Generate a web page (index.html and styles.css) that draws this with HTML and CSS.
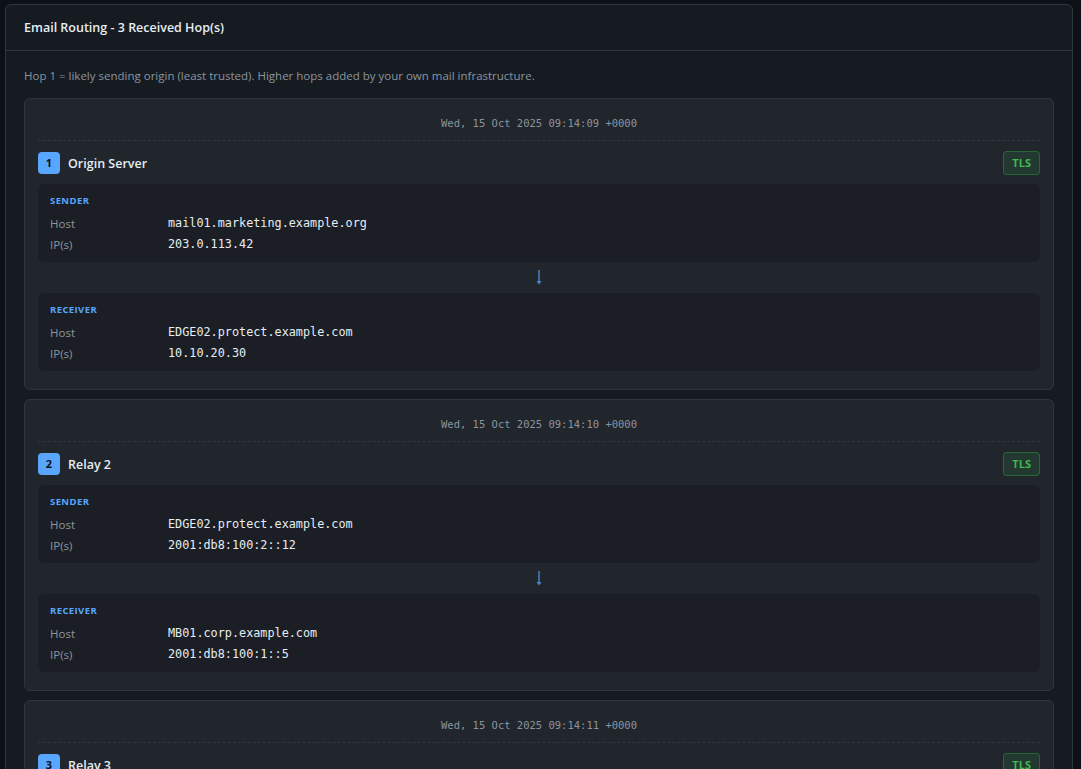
FILE: index.html
```html
<!DOCTYPE html>
<html>
<head>
    <title>Email Routing</title>
    <link rel="stylesheet" href="styles.css">
</head>
<body>
    <div class="panel">
        <div class="panel-header">Email Routing - 3 Received Hop(s)</div>
        <div class="panel-body">
            <p class="hint">Hop 1 = likely sending origin (least trusted). Higher hops added by your own mail infrastructure.</p>

            <div class="hop">
                <div class="hop-date">Wed, 15 Oct 2025 09:14:09 +0000</div>
                <div class="hop-head">
                    <span class="hop-num">1</span>
                    <span class="hop-title">Origin Server</span>
                    <span class="tls">TLS</span>
                </div>
                <div class="box">
                    <div class="box-label">SENDER</div>
                    <div class="row"><span class="key">Host</span><span class="val">mail01.marketing.example.org</span></div>
                    <div class="row"><span class="key">IP(s)</span><span class="val">203.0.113.42</span></div>
                </div>
                <div class="arrow"><svg width="8" height="15" viewBox="0 0 8 15"><path d="M4 0V13" stroke="currentColor" stroke-width="1.4"/><path d="M1.5 11L4 14.5L6.5 11Z" fill="currentColor"/></svg></div>
                <div class="box">
                    <div class="box-label">RECEIVER</div>
                    <div class="row"><span class="key">Host</span><span class="val">EDGE02.protect.example.com</span></div>
                    <div class="row"><span class="key">IP(s)</span><span class="val">10.10.20.30</span></div>
                </div>
            </div>

            <div class="hop">
                <div class="hop-date">Wed, 15 Oct 2025 09:14:10 +0000</div>
                <div class="hop-head">
                    <span class="hop-num">2</span>
                    <span class="hop-title">Relay 2</span>
                    <span class="tls">TLS</span>
                </div>
                <div class="box">
                    <div class="box-label">SENDER</div>
                    <div class="row"><span class="key">Host</span><span class="val">EDGE02.protect.example.com</span></div>
                    <div class="row"><span class="key">IP(s)</span><span class="val">2001:db8:100:2::12</span></div>
                </div>
                <div class="arrow"><svg width="8" height="15" viewBox="0 0 8 15"><path d="M4 0V13" stroke="currentColor" stroke-width="1.4"/><path d="M1.5 11L4 14.5L6.5 11Z" fill="currentColor"/></svg></div>
                <div class="box">
                    <div class="box-label">RECEIVER</div>
                    <div class="row"><span class="key">Host</span><span class="val">MB01.corp.example.com</span></div>
                    <div class="row"><span class="key">IP(s)</span><span class="val">2001:db8:100:1::5</span></div>
                </div>
            </div>

            <div class="hop">
                <div class="hop-date">Wed, 15 Oct 2025 09:14:11 +0000</div>
                <div class="hop-head">
                    <span class="hop-num">3</span>
                    <span class="hop-title">Relay 3</span>
                    <span class="tls">TLS</span>
                </div>
                <div class="box">
                    <div class="box-label">SENDER</div>
                    <div class="row"><span class="key">Host</span><span class="val">MB01.corp.example.com</span></div>
                    <div class="row"><span class="key">IP(s)</span><span class="val">2001:db8:100:1::5</span></div>
                </div>
            </div>
        </div>
    </div>
</body>
</html>
```

FILE: styles.css
```css
html, body {
    background-color: #0d1117;
}

body {
    margin: 0;
    padding: 4px 8px 0 5px;
    font-family: "Open Sans", "Noto Sans", Arial, sans-serif;
    color: #e6edf3;
}

.panel {
    background-color: #161b22;
    border: 1px solid #30363d;
    border-radius: 6px;
}

.panel-header {
    padding: 14px 18px;
    font-size: 12.5px;
    line-height: 17px;
    font-weight: 600;
    border-bottom: 1px solid #30363d;
}

.panel-body {
    padding: 16px 18px 20px;
}

.hint {
    margin: 0 0 13px;
    font-size: 11.5px;
    line-height: 18px;
    color: #8b949e;
}

.hop {
    background-color: #21262d;
    border: 1px solid #30363d;
    border-radius: 6px;
    padding: 0 13px 18px;
    margin-bottom: 9px;
}

.hop-date {
    padding: 16px 0 9px;
    line-height: 16px;
    text-align: center;
    font-family: "DejaVu Sans Mono", monospace;
    font-size: 10.5px;
    color: #8b949e;
    border-bottom: 1px dashed #30363d;
    margin-bottom: 10px;
}

.hop-head {
    display: flex;
    align-items: center;
    height: 24px;
    margin-bottom: 9px;
}

.hop-num {
    width: 22px;
    height: 22px;
    line-height: 22px;
    text-align: center;
    background-color: #58a6ff;
    color: #0d1117;
    border-radius: 4px;
    font-size: 11px;
    font-weight: 700;
    margin-right: 8px;
}

.hop-title {
    font-size: 12.5px;
    font-weight: 600;
    flex: 1;
}

.tls {
    height: 22px;
    line-height: 22px;
    padding: 0 8px;
    border: 1px solid rgba(46, 160, 67, 0.45);
    background-color: rgba(46, 160, 67, 0.15);
    color: #3fb950;
    border-radius: 4px;
    font-size: 11px;
    font-weight: 700;
}

.box {
    background-color: #1b1f25;
    border-radius: 6px;
    padding: 11px 12px 7px;
}

.box-label {
    font-size: 9.5px;
    line-height: 12px;
    font-weight: 700;
    letter-spacing: 0.4px;
    color: #58a6ff;
    margin-bottom: 6px;
}

.row {
    display: grid;
    grid-template-columns: 118px 1fr;
    align-items: center;
    height: 21px;
    line-height: 21px;
}

.key {
    font-size: 11.5px;
    color: #8b949e;
}

.val {
    font-family: "DejaVu Sans Mono", monospace;
    font-size: 11.8px;
    color: #e6edf3;
}

.arrow {
    display: flex;
    align-items: center;
    justify-content: center;
    height: 31px;
    color: #4a86cc;
}
```
